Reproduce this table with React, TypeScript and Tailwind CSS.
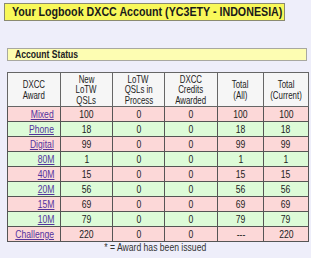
const rows = [
  { award: "Mixed", newQsl: "100", inProcess: "0", credits: "0", totalAll: "100", totalCur: "100" },
  { award: "Phone", newQsl: "18", inProcess: "0", credits: "0", totalAll: "18", totalCur: "18" },
  { award: "Digital", newQsl: "99", inProcess: "0", credits: "0", totalAll: "99", totalCur: "99" },
  { award: "80M", newQsl: "1", inProcess: "0", credits: "0", totalAll: "1", totalCur: "1" },
  { award: "40M", newQsl: "15", inProcess: "0", credits: "0", totalAll: "15", totalCur: "15" },
  { award: "20M", newQsl: "56", inProcess: "0", credits: "0", totalAll: "56", totalCur: "56" },
  { award: "15M", newQsl: "69", inProcess: "0", credits: "0", totalAll: "69", totalCur: "69" },
  { award: "10M", newQsl: "79", inProcess: "0", credits: "0", totalAll: "79", totalCur: "79" },
  { award: "Challenge", newQsl: "220", inProcess: "0", credits: "0", totalAll: "---", totalCur: "220" },
];

const headers = [
  { label: ["DXCC", "Award"], w: "w-[53px]" },
  { label: ["New", "LoTW", "QSLs"], w: "w-[52px]" },
  { label: ["LoTW", "QSLs in", "Process"], w: "w-[52px]" },
  { label: ["DXCC", "Credits", "Awarded"], w: "w-[53px]" },
  { label: ["Total", "(All)"], w: "w-[46px]" },
  { label: ["Total", "(Current)"], w: "w-[45px]" },
];

// the screenshot is a little squeezed sideways, so text is narrowed to match
function Narrow({ children, className = "origin-center scale-x-[0.86]" }: { children: React.ReactNode; className?: string }) {
  return <span className={`inline-block whitespace-nowrap ${className}`}>{children}</span>;
}

export default function App() {
  return (
    <div className="w-[311px] h-[258px] bg-[#eeeefa] overflow-hidden font-['Liberation_Sans',Arial,sans-serif] text-[#222]">
      <div className="pt-[3px] pl-[4px]">
        <div className="w-[281px] h-[18px] bg-[#f8f85a] border border-[#8a8a70] pl-[7px] flex items-center">
          <span className="inline-block whitespace-nowrap origin-left scale-x-[0.89] text-[12px] font-bold leading-none text-[#1a1a1a]">
            Your Logbook DXCC Account (YC3ETY - INDONESIA)
          </span>
        </div>
      </div>

      <div className="mt-[27px] ml-[7px] w-[300px] h-[13px] bg-[#fdfdb2] border border-[#a8a8a0] pl-[7px] flex items-center">
        <span className="text-[10px] font-bold leading-none text-[#222]">
          <Narrow className="origin-left scale-x-[0.86]">Account Status</Narrow>
        </span>
      </div>

      <table className="mt-[11px] ml-[7px] w-[301px] table-fixed border-collapse border border-[#555] text-[10px] leading-[11px]">
        <thead>
          <tr className="h-[34px] bg-[#f6f6f6]">
            {headers.map((h, i) => (
              <th key={i} className={`${h.w} border border-[#666] font-normal text-center align-middle px-0 text-[10.5px] leading-[10.5px]`}>
                {h.label.map((l) => (
                  <div key={l}>
                    <Narrow className="origin-center scale-x-[0.75]">{l}</Narrow>
                  </div>
                ))}
              </th>
            ))}
          </tr>
        </thead>
        <tbody>
          {rows.map((r, i) => (
            <tr key={r.award} className={`h-[15px] ${i % 2 === 0 ? "bg-[#fcd8d8]" : "bg-[#ddfbd8]"}`}>
              <td className="border border-[#555] text-right pr-[6px] p-0">
                <a className="text-[#55339e]">
                  <Narrow className="origin-right scale-x-[0.86] underline">{r.award}</Narrow>
                </a>
              </td>
              <td className="border border-[#555] text-center p-0"><Narrow>{r.newQsl}</Narrow></td>
              <td className="border border-[#555] text-center p-0"><Narrow>{r.inProcess}</Narrow></td>
              <td className="border border-[#555] text-center p-0"><Narrow>{r.credits}</Narrow></td>
              <td className="border border-[#555] text-center p-0"><Narrow>{r.totalAll}</Narrow></td>
              <td className="border border-[#555] text-center p-0"><Narrow>{r.totalCur}</Narrow></td>
            </tr>
          ))}
        </tbody>
      </table>

      <div className="w-[311px] text-center text-[10px] leading-[11px] text-[#333]">
        <Narrow>* = Award has been issued</Narrow>
      </div>
    </div>
  );
}
